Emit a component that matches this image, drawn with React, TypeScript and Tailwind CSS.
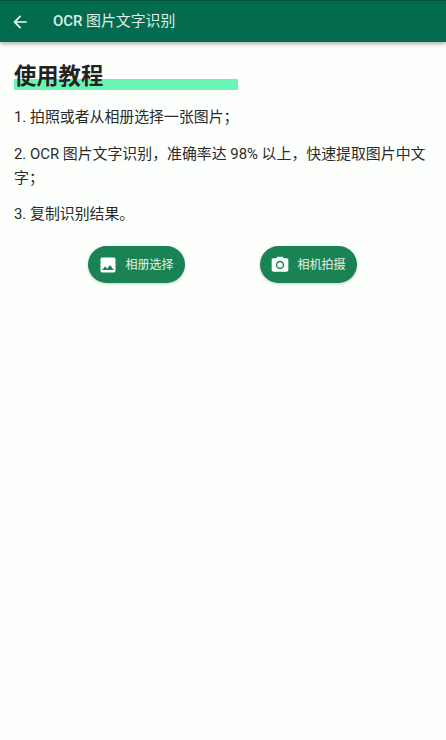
const font = { fontFamily: 'Roboto, "Noto Sans CJK SC", sans-serif' };

const ImageIcon = () => (
  <svg width="20" height="20" viewBox="0 0 24 24" fill="#fff">
    <path d="M21 19V5c0-1.1-.9-2-2-2H5c-1.1 0-2 .9-2 2v14c0 1.1.9 2 2 2h14c1.1 0 2-.9 2-2zM8.5 13.5l2.5 3.01L14.5 12l4.5 6H5l3.5-4.5z" />
  </svg>
);

const CameraIcon = () => (
  <svg width="20" height="20" viewBox="0 0 24 24" fill="#fff">
    <circle cx="12" cy="12" r="3.2" />
    <path d="M9 2L7.17 4H4c-1.1 0-2 .9-2 2v12c0 1.1.9 2 2 2h16c1.1 0 2-.9 2-2V6c0-1.1-.9-2-2-2h-3.17L15 2H9zm3 15c-2.76 0-5-2.24-5-5s2.24-5 5-5 5 2.24 5 5-2.24 5-5 5z" />
  </svg>
);

const App = () => {
  return (
    <div className="w-[446px] h-[740px] bg-[#fcfffc] flex flex-col overflow-hidden" style={font}>
      {/* Toolbar */}
      <div className="h-[42px] shrink-0 bg-[#036b4e] flex items-center shadow-[0_2px_4px_rgba(0,0,0,0.3)] border-t border-[#02523c]">
        <svg className="ml-[10px]" width="20" height="20" viewBox="0 0 24 24" fill="#f2f7f4">
          <path d="M20 11H7.83l5.59-5.59L12 4l-8 8 8 8 1.41-1.41L7.83 13H20v-2z" />
        </svg>
        <span className="ml-[23px] text-[14.9px] text-[#dfeee8]">
          <span className="font-medium">OCR</span> 图片文字识别
        </span>
      </div>

      {/* Content */}
      <div className="px-[14px] pt-[19px] text-[#2a2a2a]">
        <div className="relative h-[30px]">
          <div className="absolute left-0 top-[18px] w-[224px] h-[11px] bg-[#6bf5b4]" />
          <h1 className="relative text-[22.3px] leading-[30px] font-bold text-[#222]">使用教程</h1>
        </div>
        <p className="mt-[14px] text-[14.9px] leading-[24px]">1. 拍照或者从相册选择一张图片；</p>
        <p className="mt-[13px] text-[14.9px] leading-[24px]">2. OCR 图片文字识别，准确率达 98% 以上，快速提取图片中文字；</p>
        <p className="mt-[12px] text-[14.9px] leading-[24px]">3. 复制识别结果。</p>
        <div className="mt-[20px] flex justify-center gap-[75px] pr-[2px]">
          <button className="w-[97px] h-[37px] rounded-full bg-[#1a8356] flex items-center justify-center gap-[7px] shadow-[0_1px_3px_rgba(0,0,0,0.2)]">
            <ImageIcon />
            <span className="text-[12px] text-[#e6f2ec]">相册选择</span>
          </button>
          <button className="w-[97px] h-[37px] rounded-full bg-[#1a8356] flex items-center justify-center gap-[7px] shadow-[0_1px_3px_rgba(0,0,0,0.2)]">
            <CameraIcon />
            <span className="text-[12px] text-[#e6f2ec]">相机拍摄</span>
          </button>
        </div>
      </div>
    </div>
  );
};

export default App;
